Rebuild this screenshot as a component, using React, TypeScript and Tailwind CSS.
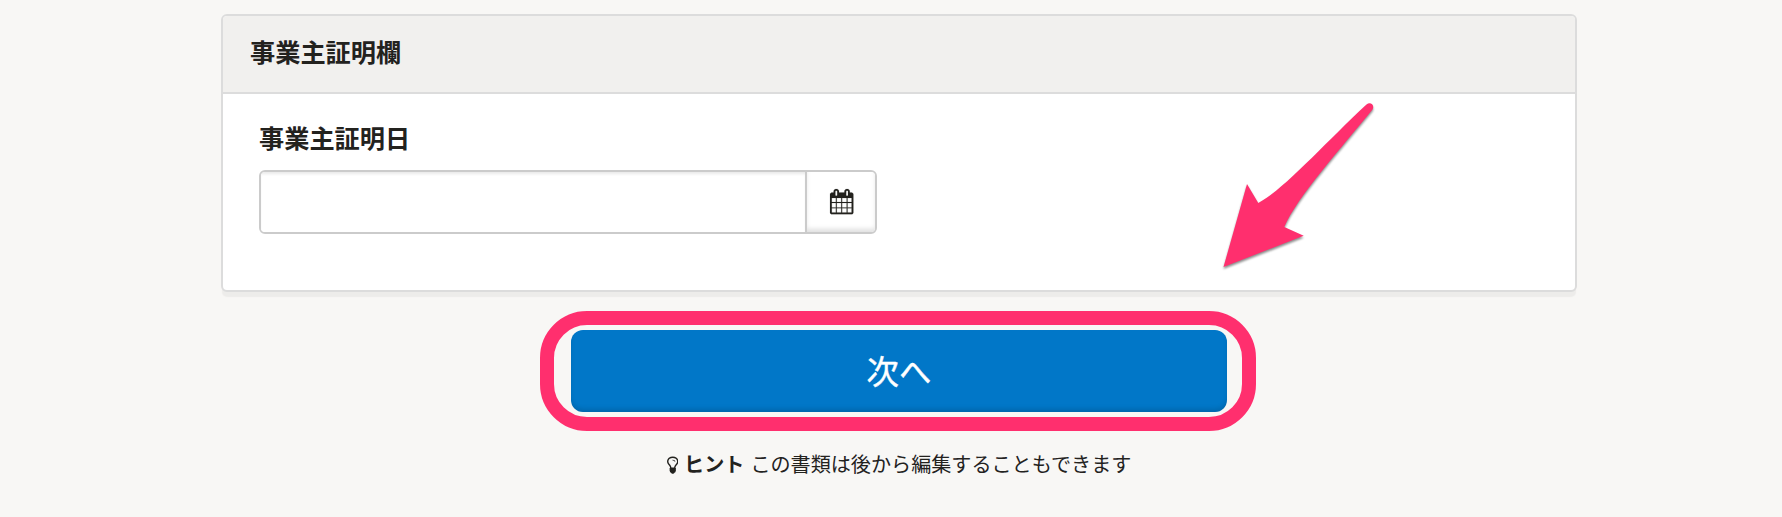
function CalendarIcon() {
  return (
    <svg
      viewBox="0 0 1664 1792"
      className="h-[25.2px] w-[23.4px] overflow-visible"
      fill="currentColor"
      stroke="currentColor"
      strokeWidth="10"
      aria-hidden="true"
    >
      <path d="M128 1664h288v-288h-288v288zm352 0h320v-288h-320v288zm-352-352h288v-320h-288v320zm352 0h320v-320h-320v320zm-352-384h288v-288h-288v288zm736 736h320v-288h-320v288zm-384-736h320v-288h-320v288zm768 736h288v-288h-288v288zm-384-352h320v-320h-320v320zm-352-864v-288q0-13-9.5-22.5t-22.5-9.5h-64q-13 0-22.5 9.5t-9.5 22.5v288q0 13 9.5 22.5t22.5 9.5h64q13 0 22.5-9.5t9.5-22.5zm736 864h288v-320h-288v320zm-384-384h320v-288h-320v288zm384 0h288v-288h-288v288zm32-480v-288q0-13-9.5-22.5t-22.5-9.5h-64q-13 0-22.5 9.5t-9.5 22.5v288q0 13 9.5 22.5t22.5 9.5h64q13 0 22.5-9.5t9.5-22.5zm384-64v1280q0 52-38 90t-90 38h-1408q-52 0-90-38t-38-90v-1280q0-52 38-90t90-38h128v-96q0-66 47-113t113-47h64q66 0 113 47t47 113v96h384v-96q0-66 47-113t113-47h64q66 0 113 47t47 113v96h128q52 0 90 38t38 90z" />
    </svg>
  );
}

function BulbIcon() {
  return (
    <svg viewBox="0 0 1024 1792" className="h-[20.2px] w-[11.5px]" fill="currentColor" aria-hidden="true">
      <path d="M736 576q0 13-9.5 22.5t-22.5 9.5-22.5-9.5-9.5-22.5q0-46-54-71t-106-25q-13 0-22.5-9.5t-9.5-22.5 9.5-22.5 22.5-9.5q50 0 99.5 16t87 54 37.5 90zm160 0q0-72-34.5-134t-90-101.5-123-62-136.5-22.5-136.5 22.5-123 62-90 101.5-34.5 134q0 101 68 180 10 11 30.5 33t30.5 33q128 153 141 298h228q13-145 141-298 10-11 30.5-33t30.5-33q68-79 68-180zm128 0q0 155-103 268-45 49-74.5 87t-59.5 95.5-34 107.5q47 28 47 82 0 37-25 64 25 27 25 64 0 52-45 81 13 23 13 47 0 46-31.5 71t-77.5 25q-20 44-60 70t-87 26-87-26-60-70q-46 0-77.5-25t-31.5-71q0-24 13-47-45-29-45-81 0-37 25-64-25-27-25-64 0-54 47-82-4-50-34-107.5t-59.5-95.5-74.5-87q-103-113-103-268 0-99 44.5-184.5t117-142 164-89 186.5-32.5 186.5 32.5 164 89 117 142 44.5 184.5z" />
    </svg>
  );
}

function Arrow() {
  return (
    <svg
      viewBox="0 0 200 190"
      className="pointer-events-none absolute top-[90px] left-[1200px] h-[190px] w-[200px] drop-shadow-[0.5px_2px_1px_rgba(0,0,0,0.45)]"
      fill="#ff2f6e"
      aria-hidden="true"
    >
      <path d="M23.5 177 L47 94 L58.3 113 C84 99.5 125 53 166.5 14.5 C170.5 11.3 175 15.3 172.5 19.5 C143 56 97 107 84.3 137 L103.7 145.7 Z" />
    </svg>
  );
}

export default function App() {
  return (
    <main className="relative flex h-[517px] w-full flex-col items-center overflow-hidden bg-[#f8f7f5] pt-3.5 pl-4 font-['Inter','Noto_Sans_CJK_JP',sans-serif] text-[#23221e]">
      <section className="h-[278px] w-[1356px] shrink-0 overflow-hidden rounded-[6px] border-2 border-[#dcdcdc] bg-white shadow-[0_6px_1px_-1px_#edecea]">
        <header className="flex h-[78px] items-center border-b-2 border-[#dcdcdc] bg-[#f1f0ee] pb-0.5 pl-[27px]">
          <h2 className="text-[25.2px] leading-9 font-bold">事業主証明欄</h2>
        </header>
        <div className="flex flex-col items-start pt-[27px] pl-9">
          <label htmlFor="date" className="text-[25.2px] leading-9 font-bold">
            事業主証明日
          </label>
          <div className="mt-[13px] flex h-16 w-[618px] overflow-hidden rounded-[6px] border-2 border-[#cbcbcb]">
            <input id="date" className="min-w-0 flex-1 bg-white shadow-[inset_0_3px_3px_-1px_rgba(0,0,0,0.09)] outline-none" />
            <button
              type="button"
              aria-label="カレンダー"
              className="flex w-[70px] items-center justify-center border-l-2 border-[#cbcbcb] bg-white pb-px pl-px shadow-[inset_0_-4px_5px_-1px_rgba(0,0,0,0.13)]"
            >
              <CalendarIcon />
            </button>
          </div>
        </div>
      </section>

      <div className="mt-[19px] mr-[2px] flex h-[120px] w-[716px] shrink-0 items-center justify-center rounded-[47px] border-[14px] border-[#ff2f6e]">
        <button
          type="button"
          className="relative left-px h-[82px] w-[656px] shrink-0 rounded-[12px] bg-[#0177c8] pt-[4px] text-[32.4px] text-white shadow-[inset_0_-4px_5px_-1px_rgba(0,0,0,0.14)] [-webkit-text-stroke:0.4px_white]"
        >
          次へ
        </button>
      </div>

      <p className="mt-[19px] flex h-[30px] items-center text-[20.1px] leading-[30px]">
        <BulbIcon />
        <strong className="ml-[6px] font-bold">ヒント</strong>
        <span className="ml-[6px]">この書類は後から編集することもできます</span>
      </p>

      <Arrow />
    </main>
  );
}
